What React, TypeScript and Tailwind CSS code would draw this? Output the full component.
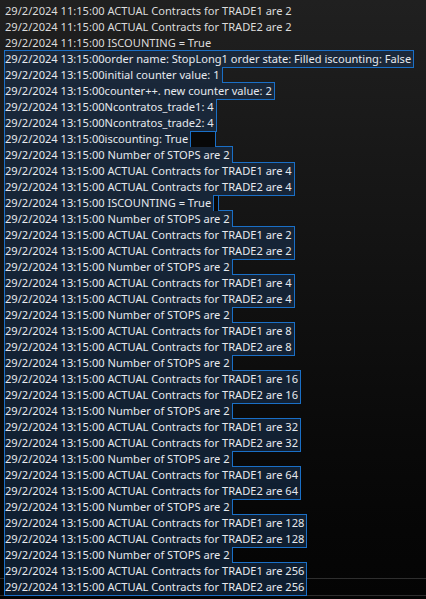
const stamp = '29/2/2024 13:15:00';

type Line = { text: string; selected?: boolean; tail?: number; current?: boolean };

const head: Line[] = [
  { text: '29/2/2024 11:15:00 ACTUAL Contracts for TRADE1 are 2' },
  { text: '29/2/2024 11:15:00 ACTUAL Contracts for TRADE2 are 2' },
  { text: '29/2/2024 11:15:00 ISCOUNTING = True' },
];

const body: Line[] = [
  { text: `${stamp}order name: StopLong1 order state: Filled iscounting: False` },
  { text: `${stamp}initial counter value: 1` },
  { text: `${stamp}counter++. new counter value: 2` },
  { text: `${stamp}Ncontratos_trade1: 4` },
  { text: `${stamp}Ncontratos_trade2: 4` },
  { text: `${stamp}iscounting: True`, tail: 26 },
  { text: `${stamp} Number of STOPS are 2` },
  { text: `${stamp} ACTUAL Contracts for TRADE1 are 4` },
  { text: `${stamp} ACTUAL Contracts for TRADE2 are 4` },
  { text: `${stamp} ISCOUNTING = True`, tail: 6 },
  { text: `${stamp} Number of STOPS are 2` },
  { text: `${stamp} ACTUAL Contracts for TRADE1 are 2` },
  { text: `${stamp} ACTUAL Contracts for TRADE2 are 2` },
];

// the doubling block at the end of the log
[4, 8, 16, 32, 64, 128, 256].forEach((n) => {
  body.push({ text: `${stamp} Number of STOPS are 2` });
  body.push({ text: `${stamp} ACTUAL Contracts for TRADE1 are ${n}` });
  body.push({ text: `${stamp} ACTUAL Contracts for TRADE2 are ${n}` });
});
body.forEach((l) => (l.selected = true));
body[body.length - 1].current = true;

const lines: Line[] = [...head, ...body, { text: '1/3/2024 00:15:00 INITIAL Counter = 0' }];

// selection colour fades a bit darker down the window, like the background does
function fillFor(i: number) {
  const t = i / (lines.length - 1);
  const mix = (a: number, b: number) => Math.round(a + (b - a) * t);
  return `rgb(${mix(27, 14)}, ${mix(41, 29)}, ${mix(59, 47)})`;
}

export default function App() {
  return (
    <div className="h-[599px] w-full overflow-hidden bg-linear-to-b from-[#202020] to-[#040404] pt-[3px] text-[11.1px] text-[#dcdcdc] font-['Segoe_UI','Noto_Sans',sans-serif]">
      {lines.map((line, i) => (
        <LogLine key={i} line={line} fill={fillFor(i)} />
      ))}
    </div>
  );
}

function LogLine({ line, fill }: { line: Line; fill: string }) {
  return (
    <div className="relative h-4 whitespace-pre pl-[5px] leading-4">
      {/* caret line frame */}
      {line.current && <div className="absolute inset-x-0 -top-px -bottom-px border-y border-[#2e2e2e]" />}
      {line.selected ? (
        <span className="relative inline-block h-4 pr-[2px] align-top">
          <span className="absolute -inset-px z-[1] border border-[#1a6fc6]" />
          <span className="absolute inset-0 z-[2]" style={{ backgroundColor: fill }} />
          <span className="relative z-[3] text-[#e6e9ee]">{line.text}</span>
        </span>
      ) : (
        <span>{line.text}</span>
      )}
      {line.tail && (
        <span
          className="relative z-[2] inline-block h-4 border border-b-0 border-[#1a6fc6] bg-[#080808] align-top"
          style={{ width: line.tail }}
        />
      )}
    </div>
  );
}
